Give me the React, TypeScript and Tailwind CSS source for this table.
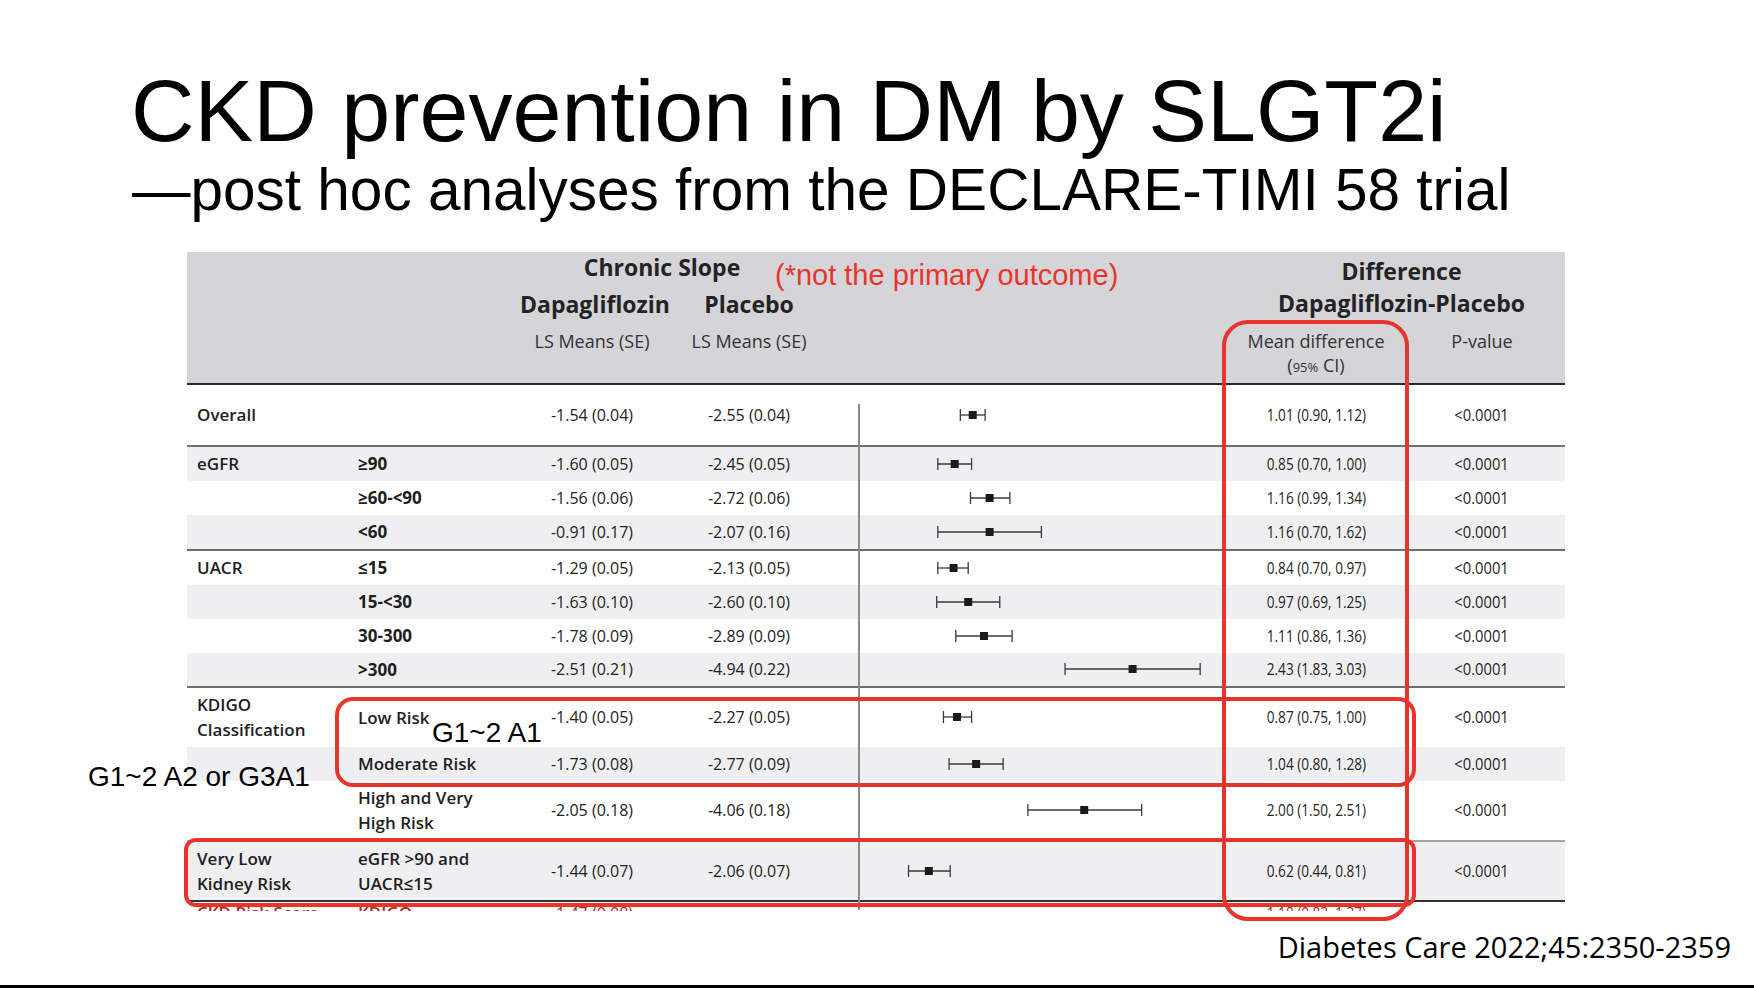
import React from "react";

type Row = {
  c1?: string[];
  c2?: string[];
  c2bold?: boolean;
  d: string;
  p: string;
  m: number;
  lo: number;
  hi: number;
  md: string;
  cls: string;
};

const rows: Row[] = [
  { c1: ["Overall"], d: "-1.54 (0.04)", p: "-2.55 (0.04)", m: 1.01, lo: 0.9, hi: 1.12, md: "1.01 (0.90, 1.12)", cls: "h-[62px] bg-white border-b-2 border-[#6e6e6e]" },
  { c1: ["eGFR"], c2: ["≥90"], c2bold: true, d: "-1.60 (0.05)", p: "-2.45 (0.05)", m: 0.85, lo: 0.7, hi: 1.0, md: "0.85 (0.70, 1.00)", cls: "h-[34px] bg-[#efeff1]" },
  { c2: ["≥60-<90"], c2bold: true, d: "-1.56 (0.06)", p: "-2.72 (0.06)", m: 1.16, lo: 0.99, hi: 1.34, md: "1.16 (0.99, 1.34)", cls: "h-[34px] bg-white" },
  { c2: ["<60"], c2bold: true, d: "-0.91 (0.17)", p: "-2.07 (0.16)", m: 1.16, lo: 0.7, hi: 1.62, md: "1.16 (0.70, 1.62)", cls: "h-[36px] bg-[#efeff1] border-b-2 border-[#6e6e6e]" },
  { c1: ["UACR"], c2: ["≤15"], c2bold: true, d: "-1.29 (0.05)", p: "-2.13 (0.05)", m: 0.84, lo: 0.7, hi: 0.97, md: "0.84 (0.70, 0.97)", cls: "h-[34px] bg-white" },
  { c2: ["15-<30"], c2bold: true, d: "-1.63 (0.10)", p: "-2.60 (0.10)", m: 0.97, lo: 0.69, hi: 1.25, md: "0.97 (0.69, 1.25)", cls: "h-[34px] bg-[#efeff1]" },
  { c2: ["30-300"], c2bold: true, d: "-1.78 (0.09)", p: "-2.89 (0.09)", m: 1.11, lo: 0.86, hi: 1.36, md: "1.11 (0.86, 1.36)", cls: "h-[34px] bg-white" },
  { c2: [">300"], c2bold: true, d: "-2.51 (0.21)", p: "-4.94 (0.22)", m: 2.43, lo: 1.83, hi: 3.03, md: "2.43 (1.83, 3.03)", cls: "h-[35px] bg-[#efeff1] border-b-2 border-[#6e6e6e]" },
  { c1: ["KDIGO", "Classification"], c2: ["Low Risk"], d: "-1.40 (0.05)", p: "-2.27 (0.05)", m: 0.87, lo: 0.75, hi: 1.0, md: "0.87 (0.75, 1.00)", cls: "h-[59px] bg-white" },
  { c2: ["Moderate Risk"], d: "-1.73 (0.08)", p: "-2.77 (0.09)", m: 1.04, lo: 0.8, hi: 1.28, md: "1.04 (0.80, 1.28)", cls: "h-[34px] bg-[#efeff1]" },
  { c2: ["High and Very", "High Risk"], d: "-2.05 (0.18)", p: "-4.06 (0.18)", m: 2.0, lo: 1.5, hi: 2.51, md: "2.00 (1.50, 2.51)", cls: "h-[61px] bg-white border-b-2 border-[#a3a3a3]" },
  { c1: ["Very Low", "Kidney Risk"], c2: ["eGFR >90 and", "UACR≤15"], d: "-1.44 (0.07)", p: "-2.06 (0.07)", m: 0.62, lo: 0.44, hi: 0.81, md: "0.62 (0.44, 0.81)", cls: "h-[60px] bg-[#efeff1] border-b-2 border-[#333333]" },
];

function Forest({ m, lo, hi }: { m: number; lo: number; hi: number }) {
  const sx = (v: number) => 25 + v * 112.6;
  return (
    <svg width="392" height="14" viewBox="0 0 392 14" className="block">
      <line x1={sx(lo)} x2={sx(hi)} y1="7" y2="7" stroke="#3a3a3a" strokeWidth="1.3" />
      <line x1={sx(lo)} x2={sx(lo)} y1="1" y2="13" stroke="#3a3a3a" strokeWidth="1.3" />
      <line x1={sx(hi)} x2={sx(hi)} y1="1" y2="13" stroke="#3a3a3a" strokeWidth="1.3" />
      <rect x={sx(m) - 4} y="3" width="8" height="8" fill="#1a1a1a" />
    </svg>
  );
}

function Lines({ lines }: { lines?: string[] }) {
  if (!lines) return null;
  return (
    <div className="leading-[25px]">
      {lines.map((l, i) => (
        <div key={i}>{l}</div>
      ))}
    </div>
  );
}

export default function App() {
  return (
    <div className="relative w-[1754px] h-[988px] overflow-hidden bg-white flex flex-col font-['Liberation_Sans',Arial,sans-serif] text-black">
      <div className="pl-[131px] pt-[67px] text-[88px] leading-none whitespace-nowrap">
        CKD prevention in DM by SLGT2i
      </div>
      <div className="pl-[132px] mt-[6px] text-[58.5px] leading-none whitespace-nowrap">
        —post hoc analyses from the DECLARE-TIMI 58 trial
      </div>

      <div className="ml-[187px] mt-[32px] w-[1378px] font-['Open_Sans',sans-serif] text-[#232323]">
        {/* header */}
        <div className="h-[133px] bg-[#d5d4d9] border-b-2 border-[#2a2a2a] flex">
          <div className="w-[1039px] flex flex-col">
            <div className="pt-[1px] pl-[333px] flex">
              <div className="w-[314px] pr-[30px] text-center text-[23px] font-bold leading-[28px]">Chronic Slope</div>
            </div>
            <div className="mt-[9px] pl-[333px] flex text-[23px] font-bold leading-[28px]">
              <div className="w-[144px] text-center">Dapagliflozin</div>
              <div className="w-[170px] text-center">Placebo</div>
            </div>
            <div className="mt-[11px] pl-[333px] flex text-[18px] leading-[24px] text-[#333]">
              <div className="w-[144px] text-center whitespace-nowrap">LS Means (SE)</div>
              <div className="w-[170px] text-center whitespace-nowrap">LS Means (SE)</div>
            </div>
          </div>
          <div className="w-[339px] flex flex-col">
            <div className="pt-[5px] pl-[12px] text-center text-[23px] font-bold leading-[28px]">Difference</div>
            <div className="mt-[4px] pl-[12px] text-center text-[23px] font-bold leading-[28px] whitespace-nowrap">
              Dapagliflozin-Placebo
            </div>
            <div className="mt-[12px] flex text-[18px] leading-[24px] text-[#333]">
              <div className="w-[180px] text-center whitespace-nowrap">
                <div>Mean difference</div>
                <div>
                  (<span className="text-[13px]">95%</span> CI)
                </div>
              </div>
              <div className="w-[159px] pr-[7px] text-center">P-value</div>
            </div>
          </div>
        </div>

        {/* body */}
        <div className="relative">
          {rows.map((r, i) => (
            <div
              key={i}
              className={"grid grid-cols-[171px_162px_144px_170px_392px_180px_159px] items-center " + r.cls}
            >
              <div className="pl-[10px] text-[17px] font-semibold text-[#1e1e1e]">
                <Lines lines={r.c1} />
              </div>
              <div className={"text-[17px] text-[#1e1e1e] whitespace-nowrap " + (r.c2bold ? "font-bold" : "font-semibold")}>
                <Lines lines={r.c2} />
              </div>
              <div className="text-center text-[16px] whitespace-nowrap">{r.d}</div>
              <div className="text-center text-[16px] whitespace-nowrap">{r.p}</div>
              <div>
                <Forest m={r.m} lo={r.lo} hi={r.hi} />
              </div>
              <div className="text-center text-[16px] whitespace-nowrap">
                <span className="inline-block scale-x-[0.85]">{r.md}</span>
              </div>
              <div className="pr-[7px] text-center text-[16px] whitespace-nowrap">
                <span className="inline-block scale-x-[0.92]">&lt;0.0001</span>
              </div>
            </div>
          ))}
          {/* next row, cut off by the figure's crop */}
          <div className="h-[9px] overflow-hidden grid grid-cols-[171px_162px_144px_170px_392px_180px_159px] text-[17px] font-semibold leading-[20px] text-[#b3261e] pt-[1px]">
            <div className="pl-[10px] whitespace-nowrap">CKD Risk Score</div>
            <div className="whitespace-nowrap">KDIGO</div>
            <div className="text-center font-normal text-[16px]">-1.47 (0.08)</div>
            <div />
            <div />
            <div className="text-center font-normal text-[16px] whitespace-nowrap">
              <span className="inline-block scale-x-[0.85]">1.18 (0.83, 1.37)</span>
            </div>
            <div />
          </div>
          {/* axis */}
          <div className="absolute left-[671px] top-[19px] w-[2px] h-[506px] bg-[#8a8a8a]" />
        </div>
      </div>

      <div className="mt-[21px] pr-[23px] text-right text-[29px] leading-none font-['Open_Sans',sans-serif] whitespace-nowrap">
        Diabetes Care 2022;45:2350-2359
      </div>
      <div className="flex-1" />
      <div className="h-[3px] bg-black" />

      {/* annotations */}
      <div className="absolute left-[775px] top-[261px] text-[29px] leading-none text-[#e8352b] whitespace-nowrap">
        (*not the primary outcome)
      </div>
      <div className="absolute left-[432px] top-[719px] text-[28px] leading-none whitespace-nowrap">G1~2 A1</div>
      <div className="absolute left-[88px] top-[763px] text-[28px] leading-none whitespace-nowrap">G1~2 A2 or G3A1</div>

      <div className="absolute left-[1222px] top-[320px] w-[187px] h-[601px] rounded-[26px] border-4 border-[#e8352b]" />
      <div className="absolute left-[335px] top-[697px] w-[1081px] h-[90px] rounded-[18px] border-4 border-[#e8352b]" />
      <div className="absolute left-[184px] top-[838px] w-[1232px] h-[69px] rounded-[12px] border-4 border-[#e8352b]" />
    </div>
  );
}
